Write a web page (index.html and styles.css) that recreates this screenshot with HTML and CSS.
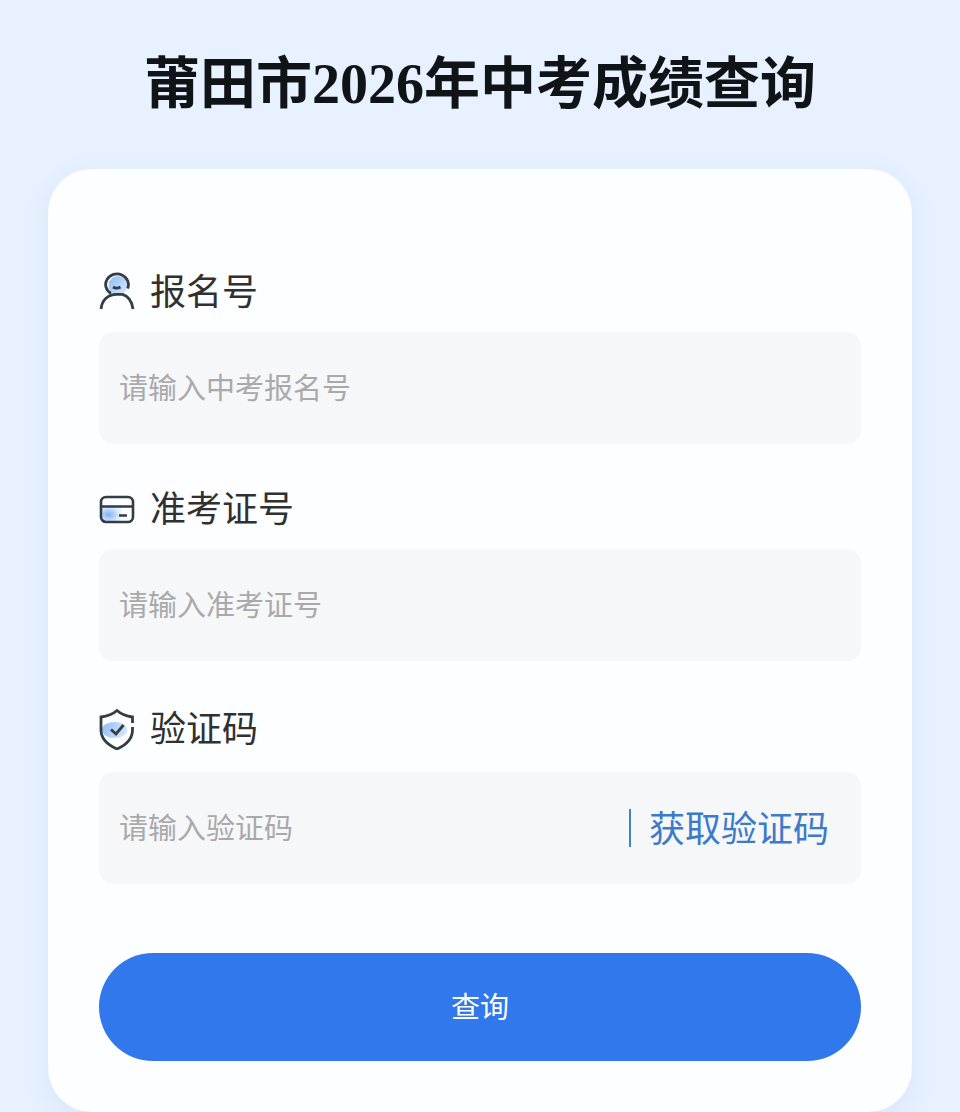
FILE: index.html
```html
<!DOCTYPE html>
<html lang="zh-CN">
<head>
    <meta charset="UTF-8">
    <meta name="viewport" content="width=device-width, initial-scale=1.0">
    <title>莆田市2026年中考成绩查询</title>
    <link rel="stylesheet" href="styles.css">
</head>
<body>
    <h1 class="title">莆田市2026年中考成绩查询</h1>
    <form class="card">
        <div class="form-group">
            <label for="regNo">
                <svg width="36" height="38" viewBox="0 0 36 38" fill="none" stroke="#343c44" stroke-width="2.8">
                    <defs>
                        <linearGradient id="faceFill" x1="0" y1="0" x2="1" y2="1">
                            <stop offset="0" stop-color="#8ebdf6"/>
                            <stop offset="1" stop-color="#d9ebff"/>
                        </linearGradient>
                    </defs>
                    <circle cx="19" cy="13.500" r="9.500" fill="url(#faceFill)" stroke="none"/>
                    <path d="M28.6 16.500A11.4 10.600 0 1 0 12 21.5"/>
                    <path d="M2 37C3 28 9 22.300 17.5 22.300H23.5C29 24 33 29 34 37"/>
                    <path d="M14 15Q17.5 17.200 21.500 15"/>
                </svg>
                <span>报名号</span>
            </label>
            <div class="input-box">
                <input type="text" id="regNo" placeholder="请输入中考报名号">
            </div>
        </div>
        <div class="form-group">
            <label for="ticketNo">
                <svg width="36" height="38" viewBox="0 0 36 38" fill="none" stroke="#343c44" stroke-width="2.6">
                    <defs>
                        <radialGradient id="cardFill" cx="0.35" cy="0.55" r="0.6">
                            <stop offset="0" stop-color="#7fb2f3"/>
                            <stop offset="1" stop-color="#e4f0ff"/>
                        </radialGradient>
                    </defs>
                    <path d="M3 18H22V32H7Q3 32 3 28Z" fill="url(#cardFill)" stroke="none"/>
                    <rect x="2" y="8" width="32" height="25" rx="5"/>
                    <path d="M2 17.5H34M20 26.5H28"/>
                </svg>
                <span>准考证号</span>
            </label>
            <div class="input-box">
                <input type="text" id="ticketNo" placeholder="请输入准考证号">
            </div>
        </div>
        <div class="form-group">
            <label for="code">
                <svg width="36" height="44" viewBox="0 0 36 44" fill="none" stroke="#343c44" stroke-width="2.8">
                    <defs>
                        <linearGradient id="shieldFill" x1="0" y1="0" x2="1" y2="0.3">
                            <stop offset="0" stop-color="#8ebdf6"/>
                            <stop offset="1" stop-color="#cfe3fc"/>
                        </linearGradient>
                    </defs>
                    <ellipse cx="15.5" cy="24" rx="12.5" ry="8" fill="url(#shieldFill)" stroke="none"/>
                    <path d="M33.5 17V11C27 10.2 22 8 18 4.500 14 8 9 10.2 2 11V24C2 32.5 9 39 18 43 27 39 33.5 32.5 33.5 24V21"/>
                    <path d="M12 23.5L17 28 24.5 19"/>
                </svg>
                <span>验证码</span>
            </label>
            <div class="input-box">
                <input type="text" id="code" placeholder="请输入验证码">
                <button type="button" class="code-btn"><span>获取验证码</span></button>
            </div>
        </div>
        <button type="submit" class="submit-btn">查询</button>
    </form>
</body>
</html>
```

FILE: styles.css
```css
* {
    box-sizing: border-box;
}

body {
    margin: 0;
    padding: 48px 48px 0;
    background-color: #e7f1ff;
    font-family: "Noto Sans CJK SC", sans-serif;
    color: #303030;
}

.title {
    margin: 0 0 49px;
    font-family: "Liberation Serif", "Noto Sans CJK SC", serif;
    font-size: 56px;
    font-weight: bold;
    line-height: 72px;
    text-align: center;
    color: #111417;
}

.card {
    padding: 103px 51px 51px;
    background-color: #fdfeff;
    border-radius: 44px;
    box-shadow: 0 8px 28px rgba(70, 110, 160, 0.08);
}

.form-group {
    margin-bottom: 45px;
}

label {
    display: flex;
    align-items: center;
    gap: 15px;
    margin-bottom: 22px;
    font-size: 36px;
    line-height: 34px;
}

/* CJK glyphs sit low in the line box */
label span,
.code-btn span {
    display: block;
    padding-bottom: 4px;
}

.input-box {
    display: flex;
    align-items: center;
    height: 112px;
    padding: 0 32px 0 20px;
    background-color: #f6f7f9;
    border-radius: 14px;
}

input {
    flex: 1;
    min-width: 0;
    height: 100%;
    padding: 0 0 4px;
    border: none;
    outline: none;
    background: none;
    font-family: inherit;
    font-size: 29px;
    color: #303030;
}

input::placeholder {
    color: #a9a9ab;
}

.code-btn {
    padding: 0 0 0 18px;
    border: none;
    border-left: 2px solid #4080cc;
    background: none;
    font-family: inherit;
    font-size: 36px;
    line-height: 34px;
    color: #3c7bcb;
    cursor: pointer;
}

.submit-btn {
    display: block;
    width: 100%;
    height: 108px;
    margin-top: 69px;
    padding: 0 0 4px;
    border: none;
    border-radius: 54px;
    background-color: #3078eb;
    font-family: inherit;
    font-size: 29px;
    color: #fff;
    cursor: pointer;
}
```
